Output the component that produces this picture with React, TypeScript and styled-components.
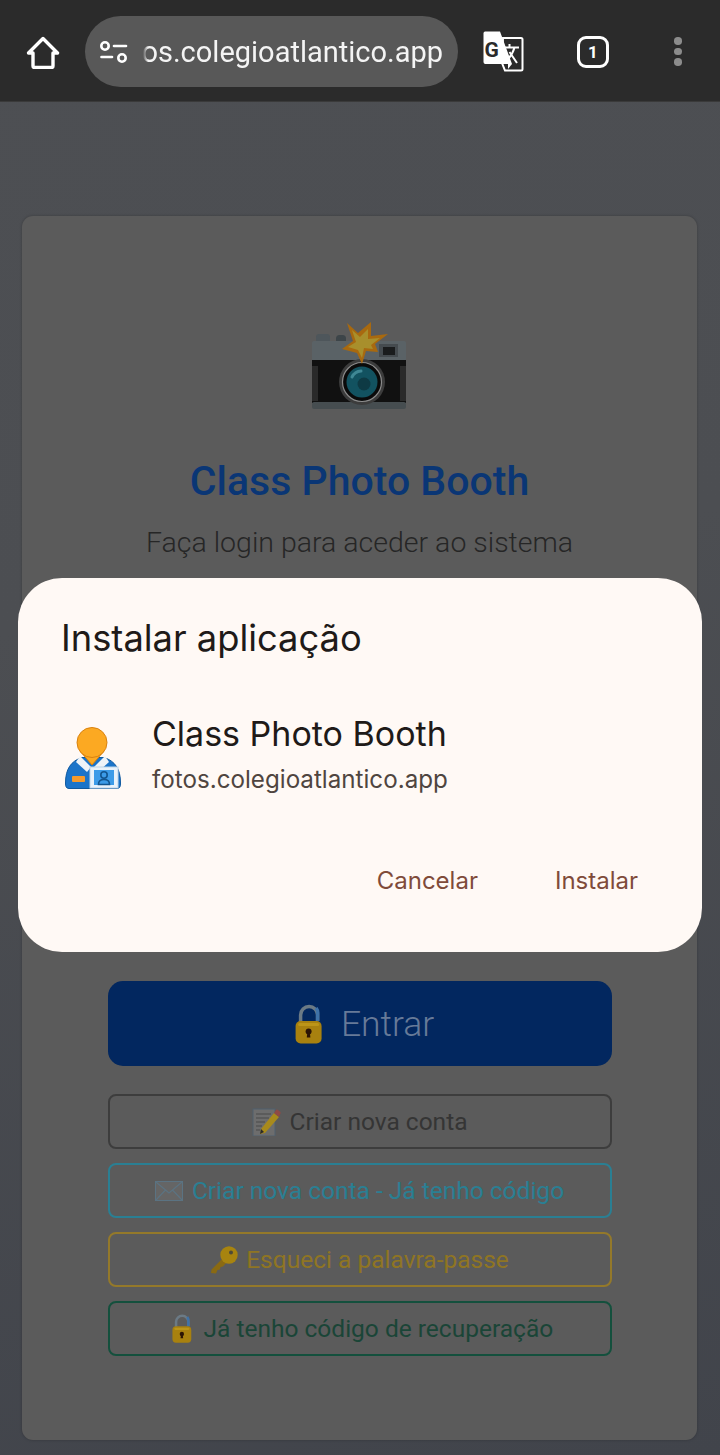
import styled, { createGlobalStyle } from "styled-components";

const GlobalStyle = createGlobalStyle`
  html, body {
    margin: 0;
    padding: 0;
    background: #44464c;
  }
  * {
    box-sizing: border-box;
  }
`;

const Screen = styled.div`
  position: relative;
  width: 720px;
  height: 1455px;
  overflow: hidden;
  font-family: Roboto, "Liberation Sans", sans-serif;
  background: linear-gradient(170deg, #4d4f53 0%, #4c4e52 40%, #41444b 100%);
`;

const Toolbar = styled.header`
  display: flex;
  align-items: center;
  height: 102px;
  padding: 2px 0 0 26px;
  background: #2b2b2b;
  border-bottom: 1px solid #3a3a3a;
`;

const HomeButton = styled.div`
  display: flex;
  width: 34px;
  margin-right: 25px;
`;

const UrlPill = styled.div`
  display: flex;
  align-items: center;
  width: 373px;
  height: 71px;
  padding: 0 15px 0 15px;
  border-radius: 36px;
  background: #585858;
`;

const UrlClip = styled.div`
  flex: 1;
  display: flex;
  justify-content: flex-end;
  overflow: hidden;
  margin-left: 15px;
  -webkit-mask-image: linear-gradient(to right, transparent 0, #000 5px);
  mask-image: linear-gradient(to right, transparent 0, #000 5px);
`;

const UrlText = styled.span`
  flex: none;
  font-size: 29px;
  color: #f4f4f4;
  white-space: nowrap;
`;

const ToolIcons = styled.div`
  display: flex;
  align-items: center;
  margin-left: 25px;
`;

const TabCount = styled.div`
  display: flex;
  align-items: center;
  justify-content: center;
  width: 32px;
  height: 32px;
  margin-left: 52px;
  border: 3px solid #fff;
  border-radius: 9px;
  font-size: 17px;
  font-weight: 700;
  color: #fff;
`;

const MenuDots = styled.div`
  display: flex;
  flex-direction: column;
  gap: 3px;
  margin-left: 65px;
`;

const Dot = styled.span`
  width: 7.5px;
  height: 7.5px;
  border-radius: 50%;
  background: #8c8c8c;
`;

const Card = styled.main`
  display: flex;
  flex-direction: column;
  align-items: center;
  width: 675px;
  height: 1224px;
  margin: 114px 0 0 22px;
  padding: 105px 86px 0;
  border-radius: 11px;
  background: #5b5b5b;
  box-shadow: 0 0 3px rgba(0, 0, 0, 0.25);
`;

const Title = styled.h1`
  margin: 43px 0 0;
  font-size: 41px;
  line-height: 54px;
  font-weight: 500;
  color: #0a3675;
  white-space: nowrap;
`;

const Subtitle = styled.p`
  margin: 17px 0 0;
  font-size: 28.5px;
  line-height: 36px;
  font-weight: 300;
  color: #262626;
  white-space: nowrap;
`;

const Actions = styled.div`
  display: flex;
  flex-direction: column;
  gap: 14px;
  width: 504px;
  margin-top: 420px;
`;

const PrimaryButton = styled.div`
  display: flex;
  align-items: center;
  justify-content: center;
  gap: 19px;
  height: 85px;
  margin-bottom: 14px;
  padding-left: 10px;
  border-radius: 15px;
  background: #02275f;
  font-size: 35.5px;
  font-weight: 300;
  color: #677a98;
`;

const OutlineButton = styled.div<{ $tone: string; $text: string; $gap: number; $inset?: number }>`
  display: flex;
  align-items: center;
  justify-content: center;
  gap: ${(p) => p.$gap}px;
  height: 55px;
  padding-left: ${(p) => p.$inset ?? 0}px;
  border: 2px solid ${(p) => p.$tone};
  border-radius: 8px;
  font-size: 24.5px;
  font-weight: 400;
  color: ${(p) => p.$text};
  white-space: nowrap;
`;

const Dialog = styled.section`
  position: absolute;
  left: 18px;
  top: 578px;
  display: flex;
  flex-direction: column;
  width: 684px;
  height: 374px;
  padding: 37px 64px 0 43px;
  border-radius: 44px;
  background: #fff9f5;
  font-family: Inter, "Noto Sans", sans-serif;
`;

const DialogTitle = styled.h2`
  margin: 0;
  font-size: 36.3px;
  line-height: 46px;
  font-weight: 400;
  color: #201a18;
  white-space: nowrap;
`;

const AppRow = styled.div`
  display: flex;
  align-items: flex-start;
  gap: 31px;
  margin-top: 50px;
`;

const AppIcon = styled.div`
  display: flex;
  flex: none;
  width: 56px;
  margin-top: 16px;
  margin-left: 4px;
`;

const AppText = styled.div`
  display: flex;
  flex-direction: column;
`;

const AppName = styled.div`
  font-size: 34px;
  line-height: 46px;
  color: #201a18;
  white-space: nowrap;
`;

const AppUrl = styled.div`
  margin-top: 6px;
  font-size: 24.2px;
  line-height: 34px;
  color: #4f4540;
  white-space: nowrap;
`;

const DialogActions = styled.div`
  display: flex;
  justify-content: flex-end;
  gap: 77px;
  margin-top: 67px;
`;

const DialogAction = styled.div`
  font-size: 24px;
  line-height: 34px;
  font-weight: 400;
  color: #7f4b3a;
`;

const HomeIcon = () => (
  <svg width="34" height="34" viewBox="0 0 34 34" fill="none" stroke="#fff" strokeWidth="3.4" strokeLinejoin="round" strokeLinecap="round">
    <path d="M2.5 18 L17 3.5 L31.5 18 H27 V31 a1.5 1.5 0 0 1 -1.5 1.5 H8.5 A1.5 1.5 0 0 1 7 31 V18 Z" />
  </svg>
);

const TuneIcon = () => (
  <svg width="28" height="22" viewBox="0 0 28 22" fill="none" stroke="#fff" strokeWidth="2.6" strokeLinecap="round">
    <circle cx="5" cy="5" r="3.7" />
    <path d="M14 5 H26" />
    <path d="M1.5 16 H12" />
    <circle cx="22" cy="17" r="3.7" />
  </svg>
);

const TranslateIcon = () => (
  <svg width="42" height="42" viewBox="0 0 42 42" fill="none">
    <path d="M20 7 H38 a1.5 1.5 0 0 1 1.5 1.5 V38 a1.5 1.5 0 0 1 -1.5 1.5 H22 L19 32 Z" stroke="#fff" strokeWidth="2" fill="#2b2b2b" />
    <path d="M2 0.5 H17 L29 33 H2 A2 2 0 0 1 0.5 31 V2 A2 2 0 0 1 2 0.5 Z" fill="#fff" />
    <path d="M25 33 L29 33 L25 38 Z" fill="#fff" />
    <text x="1.5" y="26" fontFamily="Roboto, sans-serif" fontWeight="700" fontSize="21" fill="#2b2b2b">G</text>
    <path d="M22 16.5 H36 M26.5 13 V16.5 M31.5 16.5 C30 22 27 27 22 30.5 M26.5 21 L34 32" stroke="#fff" strokeWidth="2" />
  </svg>
);

const CameraFlash = () => (
  <svg width="97" height="90" viewBox="0 0 97 90">
    <rect x="5" y="13" width="14" height="10" rx="3" fill="#4e565b" />
    <rect x="25" y="14" width="10" height="9" rx="3.5" fill="#3d4549" />
    <rect x="1" y="20" width="94" height="20" rx="2" fill="#5a6266" />
    <rect x="68" y="23" width="19" height="13" fill="#454b4f" />
    <rect x="72" y="26" width="12" height="8" fill="#1a1c1d" />
    <rect x="1" y="39" width="94" height="43" fill="#111111" />
    <rect x="1" y="45" width="6" height="35" fill="#2a2a2a" />
    <rect x="89" y="45" width="6" height="35" fill="#2a2a2a" />
    <rect x="1" y="81" width="94" height="7" rx="2" fill="#464d50" />
    <circle cx="51" cy="61" r="23" fill="#3c3c3c" />
    <circle cx="51" cy="61" r="19.5" fill="#0a0a0a" stroke="#8b8b8b" strokeWidth="1.2" />
    <circle cx="51" cy="61" r="15.5" fill="#125260" />
    <circle cx="53" cy="63" r="6.5" fill="#0e3a44" />
    <path d="M41 56 a11 11 0 0 1 9 -6" stroke="#3f8794" strokeWidth="3" fill="none" strokeLinecap="round" />
    <path d="M36 2 L47 12 L60 1 L60 15 L77 13 L64 23 L67 31 L55 30 L51 43 L46 32 L31 28 L42 20 Z" fill="#a8690f" />
    <path d="M41 9 L49 16 L57 8 L57 18 L69 17 L60 24 L62 28 L53 27 L51 37 L47 29 L37 26 L45 21 Z" fill="#a88f2c" />
  </svg>
);

const WorkerBadge = () => (
  <svg width="56" height="62" viewBox="0 0 56 62">
    <path d="M4 61.5 C1 61.5 0.5 59 0.5 56 C0.5 42 6 34 17 30.5 H39 C50 34 55.5 42 55.5 56 C55.5 59 55 61.5 52 61.5 Z" fill="#1b74c9" stroke="#115a9f" strokeWidth="1" />
    <path d="M15 29 L26 40 L22 45 L11 35 Z" fill="#eef3f8" />
    <path d="M40 29 L29 40 L33 45 L44 35 Z" fill="#eef3f8" />
    <path d="M15 24 L27 38 L39 24 Z" fill="#fca922" stroke="#d9820f" strokeWidth="1" />
    <circle cx="27" cy="15.5" r="15" fill="#fca922" stroke="#d9820f" strokeWidth="1" />
    <rect x="7" y="49" width="13" height="6" rx="1" fill="#f59a2c" />
    <rect x="25" y="40" width="28" height="21" fill="#e8f2fb" stroke="#bcd3e8" strokeWidth="1" />
    <rect x="29" y="43" width="20" height="15" fill="#3c9be8" />
    <circle cx="39" cy="48" r="3.2" fill="none" stroke="#12558f" strokeWidth="1.6" />
    <path d="M33.5 57.5 C33.5 54 35.5 52.5 39 52.5 C42.5 52.5 44.5 54 44.5 57.5 Z" fill="none" stroke="#12558f" strokeWidth="1.6" />
  </svg>
);

const OpenLock = ({ height }: { height: number }) => (
  <svg width={height * 0.68} height={height} viewBox="0 0 27 40">
    <path d="M5.5 19 V11 a8.5 8.5 0 0 1 17 0 V17" fill="none" stroke="#6b7a85" strokeWidth="3.5" />
    <path d="M21 4 a8.5 8.5 0 0 1 1.5 7 V17" fill="none" stroke="#3f72a8" strokeWidth="3.5" />
    <rect x="0.5" y="17" width="26" height="22.5" rx="5" fill="#a8810f" />
    <rect x="3" y="19" width="21" height="3" rx="1.5" fill="#bc9518" />
    <circle cx="13.5" cy="27.5" r="3" fill="#2c1505" />
    <path d="M12.3 28 H14.7 L15.3 33.5 H11.7 Z" fill="#2c1505" />
  </svg>
);

const MemoIcon = () => (
  <svg width="29" height="28" viewBox="0 0 29 28">
    <rect x="1" y="1" width="22" height="27" fill="#6d6d6d" stroke="#51606e" strokeWidth="1" />
    <path d="M4 6 H19 M4 10 H17 M4 14 H13 M4 18 H10 M4 22 H8" stroke="#4a4a4a" strokeWidth="1" />
    <path d="M22 5 L27 9 L13 25 L8 26 L9 21 Z" fill="#a88a1c" />
    <path d="M22 5 L24 2 Q25 1 26 2 L28.5 4 Q29 5 28 6.5 L27 9 Z" fill="#8f4a45" />
    <path d="M8 26 L9 21 L12 24 Z" fill="#2a2a2a" />
  </svg>
);

const EnvelopeIcon = () => (
  <svg width="28" height="20" viewBox="0 0 28 20" fill="none" stroke="#5b7382" strokeWidth="1.1">
    <rect x="0.5" y="0.5" width="27" height="19" fill="#656565" />
    <path d="M1 1 L14 12 L27 1 M1 19 L10.5 9 M27 19 L17.5 9" />
  </svg>
);

const KeyIcon = () => (
  <svg width="28" height="28" viewBox="0 0 28 28">
    <path d="M13 12 L1.5 23.5 L1 27 L6 27.5 L7.5 24 L10 23.5 L10.5 21 L13 20.5 L17 16 Z" fill="#8a6a12" />
    <circle cx="19" cy="9" r="8.7" fill="#a8840f" />
    <circle cx="21" cy="6.5" r="2" fill="#4e4a38" />
  </svg>
);

function App() {
  return (
    <Screen>
      <GlobalStyle />
      <Toolbar>
        <HomeButton>
          <HomeIcon />
        </HomeButton>
        <UrlPill>
          <TuneIcon />
          <UrlClip>
            <UrlText>fotos.colegioatlantico.app</UrlText>
          </UrlClip>
        </UrlPill>
        <ToolIcons>
          <TranslateIcon />
          <TabCount>1</TabCount>
          <MenuDots>
            <Dot />
            <Dot />
            <Dot />
          </MenuDots>
        </ToolIcons>
      </Toolbar>

      <Card>
        <CameraFlash />
        <Title>Class Photo Booth</Title>
        <Subtitle>Faça login para aceder ao sistema</Subtitle>
        <Actions>
          <PrimaryButton>
            <OpenLock height={40} />
            Entrar
          </PrimaryButton>
          <OutlineButton $tone="#3d3d3d" $text="#353535" $gap={9}>
            <MemoIcon />
            Criar nova conta
          </OutlineButton>
          <OutlineButton $tone="#2a7f93" $text="#2a7f93" $gap={9}>
            <EnvelopeIcon />
            Criar nova conta - Já tenho código
          </OutlineButton>
          <OutlineButton $tone="#94792a" $text="#8f7523" $gap={8}>
            <KeyIcon />
            Esqueci a palavra-passe
          </OutlineButton>
          <OutlineButton $tone="#14503d" $text="#1a4537" $gap={12} $inset={6}>
            <OpenLock height={29} />
            Já tenho código de recuperação
          </OutlineButton>
        </Actions>
      </Card>

      <Dialog>
        <DialogTitle>Instalar aplicação</DialogTitle>
        <AppRow>
          <AppIcon>
            <WorkerBadge />
          </AppIcon>
          <AppText>
            <AppName>Class Photo Booth</AppName>
            <AppUrl>fotos.colegioatlantico.app</AppUrl>
          </AppText>
        </AppRow>
        <DialogActions>
          <DialogAction>Cancelar</DialogAction>
          <DialogAction>Instalar</DialogAction>
        </DialogActions>
      </Dialog>
    </Screen>
  );
}

export default App;
